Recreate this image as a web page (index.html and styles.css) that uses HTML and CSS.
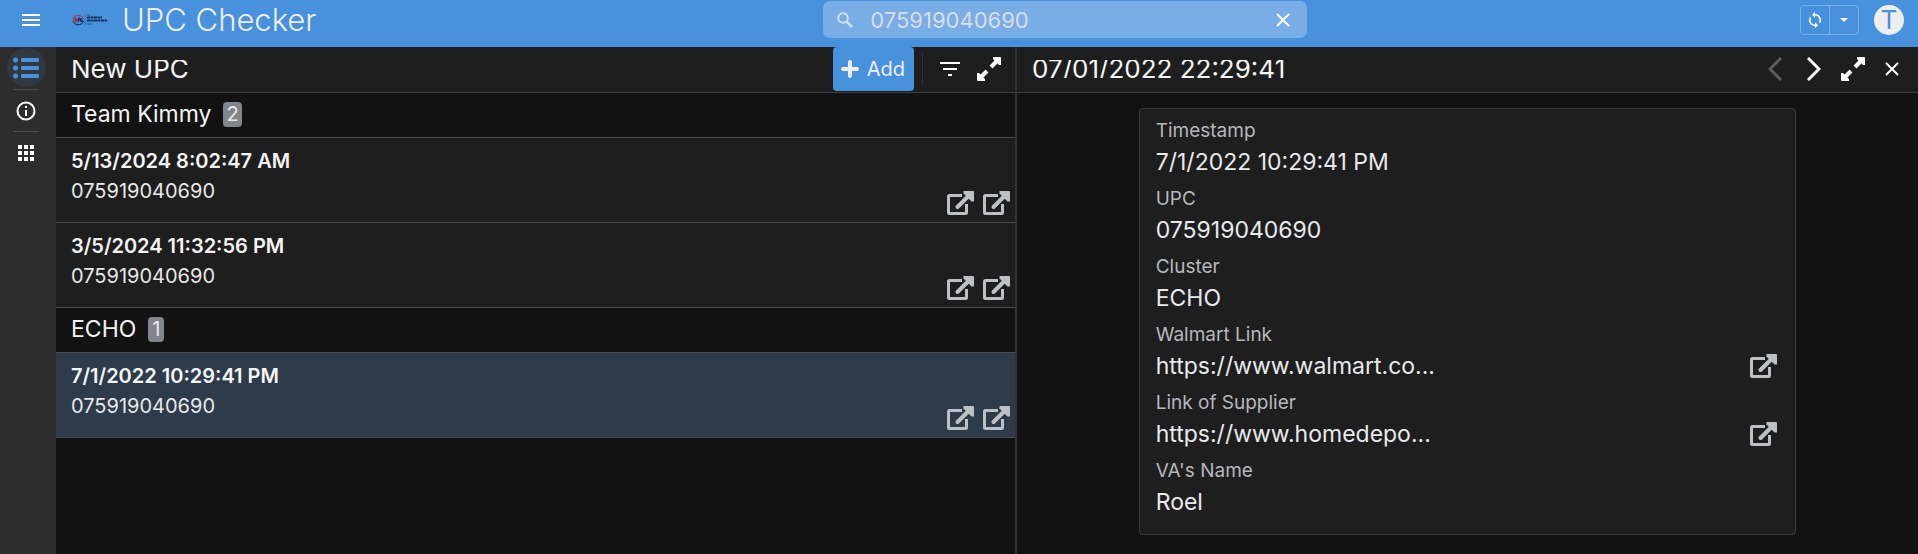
FILE: index.html
```
<!DOCTYPE html>
<html lang="en">
<head>
    <meta charset="UTF-8">
    <meta name="viewport" content="width=device-width, initial-scale=1.0">
    <title>UPC Checker</title>
    <link rel="stylesheet" href="styles.css">
</head>
<body>
    <!-- shared icons -->
    <svg class="sprite" aria-hidden="true">
        <symbol id="icon-open" viewBox="0 0 28 24">
            <path d="M16 4.500H3.500a1 1 0 0 0-1 1v16a1 1 0 0 0 1 1h16a1 1 0 0 0 1-1V13" fill="none" stroke="currentColor" stroke-width="3"/>
            <path d="M11.500 16L23 4.500" fill="none" stroke="currentColor" stroke-width="4" stroke-linecap="round"/>
            <path d="M17.500 0H27a1 1 0 0 1 1 1v9.500h-2.500L17.500 2.500z" fill="currentColor"/>
        </symbol>
        <symbol id="icon-expand" viewBox="0 0 24 24">
            <path d="M14 10l6-6M10 14l-6 6" fill="none" stroke="currentColor" stroke-width="4"/>
            <path d="M16 0h7a1 1 0 0 1 1 1v7l-2 0-6-6zM8 24H1a1 1 0 0 1-1-1v-7h2l6 6z" fill="currentColor"/>
        </symbol>
        <symbol id="icon-close" viewBox="0 0 14 14">
            <path d="M1 1l12 12M13 1L1 13" fill="none" stroke="currentColor" stroke-width="2"/>
        </symbol>
    </svg>

    <header class="topbar">
        <div class="brand">
            <button class="icon-btn menu-btn" aria-label="Menu">
                <svg width="18" height="12" viewBox="0 0 18 12"><path d="M0 1h18M0 6h18M0 11h18" stroke="currentColor" stroke-width="2"/></svg>
            </button>
            <svg class="logo" width="36" height="14" viewBox="0 0 36 14">
                <path d="M1 6a5.500 5.500 0 0 1 10.500 0" fill="none" stroke="#a8324e" stroke-width="1"/>
                <path d="M1 8a5.500 5.500 0 0 0 10.500 0" fill="none" stroke="#14274f" stroke-width="1"/>
                <path d="M1 9l2-4 1 4 1-4 1 4" fill="none" stroke="#a8324e" stroke-width="1.200"/>
                <path d="M6 9l1-4 2 4V5l2 4" fill="none" stroke="#1d3775" stroke-width="1.200"/>
                <path d="M13 1v12" stroke="#3b6fa8" stroke-width="1"/>
                <path d="M15 2h3M15 11h5" stroke="#285a90" stroke-width="1"/>
                <path d="M15 4.500h15M15 7.500h20" stroke="#14305a" stroke-width="2" stroke-dasharray="3 .5"/>
            </svg>
            <h1>UPC Checker</h1>
        </div>
        <div class="search">
            <svg width="16" height="16" viewBox="0 0 16 16"><circle cx="6" cy="6" r="4.800" fill="none" stroke="currentColor" stroke-width="2"/><path d="M9.500 9.500l5.500 5.500" stroke="currentColor" stroke-width="2.500"/></svg>
            <input type="text" value="075919040690" aria-label="Search">
            <button class="icon-btn" aria-label="Clear search"><svg width="14" height="14"><use href="#icon-close"/></svg></button>
        </div>
        <div class="account">
            <div class="sync">
                <button aria-label="Sync">
                    <svg width="18" height="18" viewBox="0 0 24 24"><path d="M12 4V1L8 5l4 4V6c3.310 0 6 2.690 6 6 0 1.010-.25 1.970-.7 2.800l1.460 1.460C19.540 15.030 20 13.570 20 12c0-4.420-3.580-8-8-8zm0 14c-3.310 0-6-2.690-6-6 0-1.010.25-1.970.7-2.800L5.240 7.740C4.460 8.970 4 10.430 4 12c0 4.420 3.580 8 8 8v3l4-4-4-4v3z" fill="currentColor"/></svg>
                </button>
                <button aria-label="Sync options">
                    <svg width="8" height="4" viewBox="0 0 8 4"><path d="M0 0h8L4 4z" fill="currentColor"/></svg>
                </button>
            </div>
            <button class="avatar">T</button>
        </div>
    </header>

    <div class="workspace">
        <nav class="sidebar">
            <a class="active" href="#" aria-label="New UPC">
                <svg width="26" height="22" viewBox="0 0 26 22"><g fill="currentColor"><circle cx="2.500" cy="3" r="2.500"/><circle cx="2.500" cy="11" r="2.500"/><circle cx="2.500" cy="19" r="2.500"/><rect x="8" y="1" width="18" height="4" rx="1"/><rect x="8" y="9" width="18" height="4" rx="1"/><rect x="8" y="17" width="18" height="4" rx="1"/></g></svg>
            </a>
            <a href="#" aria-label="About">
                <svg width="20" height="20" viewBox="0 0 20 20"><circle cx="10" cy="10" r="8.500" fill="none" stroke="currentColor" stroke-width="2"/><path d="M10 9v6M10 5v2" stroke="currentColor" stroke-width="2"/></svg>
            </a>
            <a href="#" aria-label="Apps">
                <svg width="16" height="16" viewBox="0 0 16 16"><path d="M0 2h16M0 8h16M0 14h16" stroke="currentColor" stroke-width="4" stroke-dasharray="4 2"/></svg>
            </a>
        </nav>

        <main class="list-pane">
            <div class="pane-head">
                <h2>New UPC</h2>
                <button class="add-btn">
                    <svg width="18" height="18" viewBox="0 0 18 18"><path d="M9 2v14M2 9h14" stroke="currentColor" stroke-width="4" stroke-linecap="round"/></svg>
                    Add
                </button>
                <div class="list-tools">
                    <button class="icon-btn" aria-label="Filter">
                        <svg width="20" height="14" viewBox="0 0 20 14"><path d="M0 1h20M3 7h14M8 13h4" stroke="currentColor" stroke-width="2"/></svg>
                    </button>
                    <button class="icon-btn" aria-label="Expand list"><svg width="24" height="24"><use href="#icon-expand"/></svg></button>
                </div>
            </div>

            <h3 class="group">Team Kimmy <span class="count">2</span></h3>
            <article class="row">
                <div>
                    <h4>5/13/2024 8:02:47 AM</h4>
                    <p>075919040690</p>
                </div>
                <div class="row-links">
                    <a href="#" aria-label="Walmart Link"><svg width="28" height="24"><use href="#icon-open"/></svg></a>
                    <a href="#" aria-label="Link of Supplier"><svg width="28" height="24"><use href="#icon-open"/></svg></a>
                </div>
            </article>
            <article class="row">
                <div>
                    <h4>3/5/2024 11:32:56 PM</h4>
                    <p>075919040690</p>
                </div>
                <div class="row-links">
                    <a href="#" aria-label="Walmart Link"><svg width="28" height="24"><use href="#icon-open"/></svg></a>
                    <a href="#" aria-label="Link of Supplier"><svg width="28" height="24"><use href="#icon-open"/></svg></a>
                </div>
            </article>

            <h3 class="group">ECHO <span class="count">1</span></h3>
            <article class="row selected">
                <div>
                    <h4>7/1/2022 10:29:41 PM</h4>
                    <p>075919040690</p>
                </div>
                <div class="row-links">
                    <a href="#" aria-label="Walmart Link"><svg width="28" height="24"><use href="#icon-open"/></svg></a>
                    <a href="#" aria-label="Link of Supplier"><svg width="28" height="24"><use href="#icon-open"/></svg></a>
                </div>
            </article>
        </main>

        <section class="detail-pane">
            <div class="pane-head">
                <h2>07/01/2022 22:29:41</h2>
                <div class="detail-tools">
                    <button class="icon-btn" aria-label="Previous" disabled>
                        <svg width="14" height="24" viewBox="0 0 14 24"><path d="M13 1L2 12l11 11" fill="none" stroke="currentColor" stroke-width="3"/></svg>
                    </button>
                    <button class="icon-btn" aria-label="Next">
                        <svg width="14" height="24" viewBox="0 0 14 24"><path d="M1 1l11 11L1 23" fill="none" stroke="currentColor" stroke-width="3"/></svg>
                    </button>
                    <button class="icon-btn" aria-label="Expand details"><svg width="24" height="24"><use href="#icon-expand"/></svg></button>
                    <button class="icon-btn" aria-label="Close"><svg width="14" height="14"><use href="#icon-close"/></svg></button>
                </div>
            </div>

            <dl class="card">
                <dt>Timestamp</dt>
                <dd>7/1/2022 10:29:41 PM</dd>
                <dt>UPC</dt>
                <dd>075919040690</dd>
                <dt>Cluster</dt>
                <dd>ECHO</dd>
                <dt>Walmart Link</dt>
                <dd class="link">https://www.walmart.co... <a href="#" aria-label="Open Walmart Link"><svg width="28" height="24"><use href="#icon-open"/></svg></a></dd>
                <dt>Link of Supplier</dt>
                <dd class="link">https://www.homedepo... <a href="#" aria-label="Open Link of Supplier"><svg width="28" height="24"><use href="#icon-open"/></svg></a></dd>
                <dt>VA's Name</dt>
                <dd>Roel</dd>
            </dl>
        </section>
    </div>
</body>
</html>
```

FILE: styles.css
```
* {
    box-sizing: border-box;
}
body {
    margin: 0;
    min-height: 100vh;
    display: flex;
    flex-direction: column;
    background-color: #121212;
    color: #f5f5f5;
    font-family: Inter, "Liberation Sans", sans-serif;
    font-size: 20px;
}
h1, h2, h3, h4, p, dl, dd {
    margin: 0;
    font-weight: 400;
}
button, input {
    font: inherit;
    color: inherit;
    background: none;
    border: none;
    padding: 0;
}
button {
    cursor: pointer;
}
a {
    color: inherit;
}
svg {
    display: block;
}
.sprite {
    position: absolute;
    width: 0;
    height: 0;
}
.icon-btn {
    display: flex;
    align-items: center;
    justify-content: center;
    color: #fff;
}

/* top bar */
.topbar {
    display: grid;
    grid-template-columns: 19fr 484px 14fr;
    align-items: center;
    column-gap: 24px;
    height: 47px;
    padding: 0 14px 8px 22px;
    background-color: #4891dc;
}
.brand {
    display: flex;
    align-items: center;
}
.menu-btn {
    margin-right: 32px;
}
.logo {
    margin-right: 14px;
}
h1 {
    font-size: 31px;
    font-weight: 300;
    line-height: 38px;
    color: #eee;
}
.search {
    display: flex;
    align-items: center;
    gap: 17px;
    height: 37px;
    padding: 0 17px 0 14px;
    border-radius: 7px;
    background-color: #78ade5;
    color: #d9dde2;
}
.search input {
    flex: 1;
    min-width: 0;
    font-size: 22px;
    outline: none;
}
.account {
    display: flex;
    justify-content: flex-end;
    gap: 15px;
}
.sync {
    display: flex;
    height: 30px;
    border: 1px solid #78ade5;
    border-radius: 4px;
    color: #fff;
}
.sync button {
    display: flex;
    align-items: center;
    justify-content: center;
    width: 28px;
}
.sync button + button {
    width: 29px;
    border-left: 1px solid #78ade5;
}
.avatar {
    width: 30px;
    height: 30px;
    border-radius: 50%;
    background-color: #eee;
    color: #4891dc;
    font-size: 26px;
    line-height: 30px;
}

/* left navigation */
.workspace {
    display: flex;
    flex: 1;
}
.sidebar {
    display: flex;
    flex-direction: column;
    align-items: center;
    width: 56px;
    padding: 1px 4px 0 0;
    background-color: #2d2d2d;
    color: #fff;
}
.sidebar a {
    display: flex;
    align-items: center;
    justify-content: center;
    width: 39px;
    height: 39px;
}
.sidebar a + a {
    width: 26px;
    height: 42px;
    border-top: 1px solid #4a4a4a;
}
.sidebar .active {
    margin-bottom: 2px;
    border-radius: 50%;
    background-color: #303841;
    color: #4891dc;
}

/* record list */
.list-pane {
    flex: 33 1 0;
    min-width: 0;
    border-right: 2px solid #333;
}
.detail-pane {
    flex: 31 1 0;
    min-width: 0;
}
.pane-head {
    display: flex;
    align-items: center;
    height: 46px;
    padding: 0 0 1px 15px;
    border-bottom: 1px solid #3f3f3f;
    background-color: #1e1e1e;
}
h2 {
    flex: 1;
    overflow: hidden;
    font-size: 26px;
    line-height: 18px;
}
.add-btn {
    display: flex;
    align-items: center;
    gap: 8px;
    height: 44px;
    padding: 0 9px 0 8px;
    border-radius: 4px;
    background-color: #4891dc;
    color: #eee;
    font-size: 20px;
}
.list-tools {
    display: flex;
    align-items: center;
    gap: 17px;
    height: 30px;
    margin-left: 8px;
    padding: 0 14px 0 17px;
    border-left: 1px solid #333;
}
.group {
    display: flex;
    align-items: center;
    gap: 12px;
    height: 45px;
    padding: 0 0 2px 15px;
    border-bottom: 1px solid #4a4a4a;
    font-size: 23px;
}
.count {
    padding: 0 3px;
    min-width: 16px;
    border-radius: 4px;
    background-color: #80868b;
    font-size: 20px;
    line-height: 25px;
    text-align: center;
    color: #e8eaed;
}
.row {
    display: flex;
    justify-content: space-between;
    height: 85px;
    padding: 8px 5px 7px 15px;
    border-bottom: 1px solid #4a4a4a;
    background-color: #1e1e1e;
}
.row.selected {
    background-color: #2d3b4b;
}
.row h4 {
    font-weight: 600;
    line-height: 30px;
}
.row p {
    line-height: 30px;
    color: #e8e8e8;
}
.row-links {
    display: flex;
    align-items: flex-end;
    gap: 8px;
    color: #bdc1c6;
}

/* record details */
.detail-tools {
    display: flex;
    align-items: center;
    padding-right: 7px;
}
.detail-tools .icon-btn {
    width: 39px;
}
.detail-tools .icon-btn:disabled {
    color: #5c5c5c;
}
.card {
    width: 73%;
    margin: 15px auto 0;
    padding: 8px 16px 9px;
    border: 1px solid #3a3a3a;
    border-radius: 4px;
    background-color: #1e1e1e;
}
.card dt {
    font-size: 19px;
    line-height: 28px;
    color: #b4b8bd;
}
.card dd {
    padding-bottom: 6px;
    font-size: 23px;
    line-height: 34px;
    color: #e8eaed;
}
.card .link {
    display: flex;
    align-items: center;
    justify-content: space-between;
    padding-right: 2px;
}
.card .link a {
    color: #bdc1c6;
}
```
